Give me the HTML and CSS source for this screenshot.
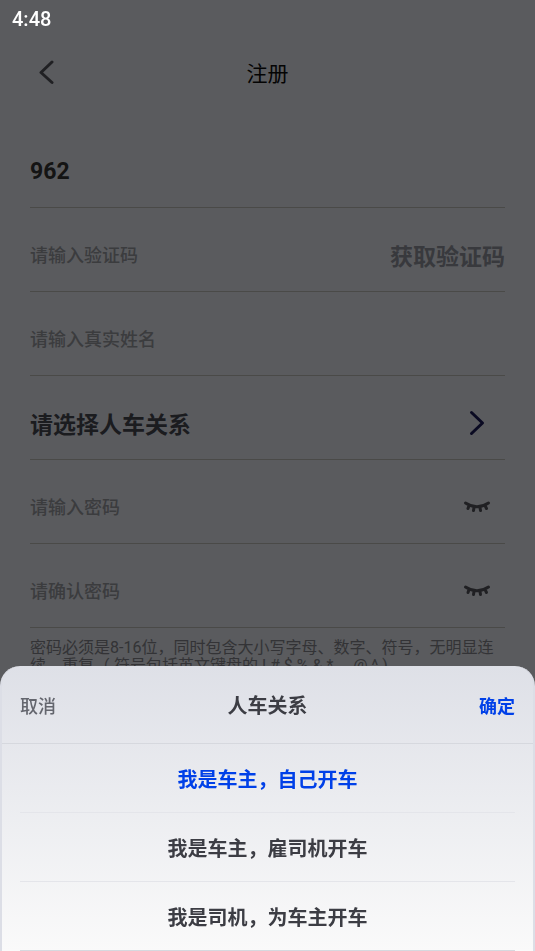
FILE: index.html
```html
<!DOCTYPE html>
<html lang="zh-CN">
  <head>
    <meta charset="UTF-8" />
    <meta name="viewport" content="width=device-width, initial-scale=1.0" />
    <title>注册</title>
    <link rel="stylesheet" href="styles.css">
  </head>
  <body>
    <div class="status-bar"><time class="clock">4:48</time></div>
    <header class="nav">
      <button class="nav-back" type="button" aria-label="返回">
        <svg width="16" height="26" viewBox="0 0 16 26"><path d="M14 3 3 13.500l11 10" /></svg>
      </button>
      <h1 class="nav-title">注册</h1>
    </header>
    <form class="form">
      <div class="field">
        <input class="input input-phone" type="tel" value="962" aria-label="手机号" />
      </div>
      <div class="field">
        <input class="input" type="text" placeholder="请输入验证码" aria-label="验证码" />
        <button class="code-btn" type="button">获取验证码</button>
      </div>
      <div class="field">
        <input class="input" type="text" placeholder="请输入真实姓名" aria-label="真实姓名" />
      </div>
      <button class="field field-select" type="button">
        <span>请选择人车关系</span>
        <svg class="arrow" width="16" height="26" viewBox="0 0 16 26"><path d="M2.5 2.500 13.500 13l-11 10.500" /></svg>
      </button>
      <div class="field">
        <input class="input" type="password" placeholder="请输入密码" aria-label="密码" />
        <button class="eye-btn" type="button" aria-label="显示密码">
          <svg width="28" height="14" viewBox="0 0 28 14"><path d="M2.500 3Q14 10.500 25.500 3M6 5.500 5 8.500M11 7.500 10.500 10.500M17 7.500 17.500 10.500M22 5.500 23.500 8.500" /></svg>
        </button>
      </div>
      <div class="field">
        <input class="input" type="password" placeholder="请确认密码" aria-label="确认密码" />
        <button class="eye-btn" type="button" aria-label="显示密码">
          <svg width="28" height="14" viewBox="0 0 28 14"><path d="M2.500 3Q14 10.500 25.500 3M6 5.500 5 8.500M11 7.500 10.500 10.500M17 7.500 17.500 10.500M22 5.500 23.500 8.500" /></svg>
        </button>
      </div>
      <p class="hint">密码必须是8-16位，同时包含大小写字母、数字、符号，无明显连续、重复（ 符号包括英文键盘的 ! # $ % &amp; * 、@ ^ )</p>
    </form>

    <div class="mask"></div>
    <section class="sheet" role="dialog" aria-labelledby="sheet-title">
      <div class="sheet-header">
        <button class="sheet-btn" type="button">取消</button>
        <h2 class="sheet-title" id="sheet-title">人车关系</h2>
        <button class="sheet-btn sheet-ok" type="button">确定</button>
      </div>
      <div class="options">
        <label class="option"><input type="radio" name="relation" checked /><span>我是车主，自己开车</span></label>
        <label class="option"><input type="radio" name="relation" /><span>我是车主，雇司机开车</span></label>
        <label class="option"><input type="radio" name="relation" /><span>我是司机，为车主开车</span></label>
      </div>
    </section>
  </body>
</html>
```
FILE: styles.css
```css
* {
  box-sizing: border-box;
}
body {
  margin: 0;
  height: 100vh;
  overflow: hidden;
  background: #e1e3ea;
  font-family: Roboto, "Noto Sans CJK SC", sans-serif;
}
button,
input {
  margin: 0;
  padding: 0;
  border: 0;
  background: none;
  font-family: inherit;
}
svg {
  display: block;
  fill: none;
  stroke: #505259;
  stroke-width: 3;
  stroke-linecap: round;
  stroke-linejoin: round;
}

/* 状态栏，显示在遮罩上方 */
.status-bar {
  position: relative;
  z-index: 3;
  display: flex;
  align-items: center;
  height: 38px;
  padding: 0 12px;
}
.clock {
  color: #fff;
  font-size: 20px;
  font-weight: 500;
}

/* 导航栏 */
.nav {
  display: grid;
  grid-template-columns: 1fr auto 1fr;
  align-items: center;
  height: 68px;
  padding: 0 38px;
}
.nav-back {
  justify-self: start;
}
.nav-title {
  margin: 0;
  color: #0c0c0c;
  font-size: 21px;
  font-weight: 400;
}

/* 表单 */
.form {
  padding: 18px 30px 0;
}
.field {
  display: flex;
  align-items: center;
  justify-content: space-between;
  width: 100%;
  height: 84px;
  padding-top: 11px;
  border-bottom: 1px solid #b8b9b4;
}
.input {
  flex: 1;
  min-width: 0;
  height: 36px;
  outline: none;
  color: #333;
  font-size: 18px;
  font-weight: 500;
}
.input::placeholder {
  color: #94969c;
  opacity: 1;
}
.input-phone {
  font-size: 23px;
  font-weight: 700;
}
.code-btn {
  color: #8c8f99;
  font-size: 23px;
  font-weight: 700;
}
.field-select {
  color: #44464f;
  font-size: 23px;
  font-weight: 700;
}
.arrow {
  margin-right: 20px;
  stroke: #191955;
}
.eye-btn {
  margin-right: 14px;
}
.hint {
  margin: 11px 0 0;
  color: #808187;
  font-size: 16px;
  line-height: 18px;
}

/* 底部弹层 */
.mask {
  position: fixed;
  inset: 0;
  z-index: 1;
  background: rgba(0, 0, 0, 0.6);
}
.sheet {
  position: fixed;
  right: 0;
  bottom: 0;
  left: 0;
  z-index: 2;
  overflow: hidden;
  border: solid #dcdee6;
  border-width: 0 2px;
  border-radius: 20px 20px 0 0;
  background: linear-gradient(#dee0e7, #fafafa);
}
.sheet-header {
  display: flex;
  align-items: center;
  justify-content: space-between;
  height: 78px;
  padding: 0 18px;
  border-bottom: 1px solid #d6d8de;
}
.sheet-title {
  margin: 0;
  color: #3c3d44;
  font-size: 20px;
  font-weight: 700;
}
.sheet-btn {
  color: #64666e;
  font-size: 18px;
  font-weight: 500;
}
.sheet-ok {
  color: #0040e8;
  font-weight: 700;
}
.options {
  padding: 0 18px;
}
.option {
  display: flex;
  align-items: center;
  justify-content: center;
  height: 69px;
  border-bottom: 1px solid #e4e5ea;
  color: #3c3d44;
  font-size: 20px;
  font-weight: 700;
}
.option:last-child {
  border-bottom-color: #d6d8de;
}
.option input {
  appearance: none;
}
.option input:checked + span {
  color: #0040e8;
}
```
